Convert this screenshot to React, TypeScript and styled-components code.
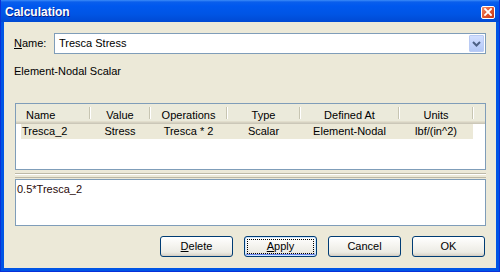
import styled, { createGlobalStyle } from "styled-components";

const GlobalStyle = createGlobalStyle`
    html, body {
        margin: 0;
        padding: 0;
        background: #ECE9D8;
    }
    * {
        box-sizing: border-box;
    }
`;

const Window = styled.div`
    width: 500px;
    height: 272px;
    display: flex;
    flex-direction: column;
    background: #0055E5;
    border-left: 1px solid #0831D9;
    border-right: 1px solid #0831D9;
    border-bottom: 1px solid #0831D9;
    font-family: "Liberation Sans", Arial, sans-serif;
    font-size: 11px;
    color: #000;
`;

const TitleBar = styled.div`
    height: 22px;
    flex-shrink: 0;
    display: flex;
    align-items: center;
    justify-content: space-between;
    padding: 2px 4px 0 4px;
    background: linear-gradient(to bottom, #3C8CF8 0px, #0A5EEC 2px, #0058EE 6px, #0055E5 14px, #0049D3 22px);
`;

const Title = styled.div`
    color: #fff;
    font-weight: bold;
    font-size: 12px;
    text-shadow: 1px 1px 0 #0A1E8A;
`;

const CloseButton = styled.div`
    width: 14px;
    height: 13px;
    border: 1px solid #fff;
    border-radius: 2px;
    background: linear-gradient(135deg, #F08C6C 0%, #E0552E 50%, #C4381A 100%);
    display: flex;
    align-items: center;
    justify-content: center;
`;

const Client = styled.div`
    flex: 1;
    margin: 0 3px 3px 3px;
    background: #ECE9D8;
    display: flex;
    flex-direction: column;
    padding: 11px 10px 0 10px;
`;

const NameRow = styled.div`
    display: flex;
    align-items: center;
    height: 21px;
`;

const Label = styled.div`
    width: 40px;
    line-height: 13px;
`;

const Underline = styled.span`
    text-decoration: underline;
`;

const Combo = styled.div`
    flex: 1;
    height: 21px;
    border: 1px solid #7F9DB9;
    background: #fff;
    display: flex;
    align-items: center;
    justify-content: space-between;
    padding: 1px 1px 1px 4px;
`;

const ComboText = styled.div`
    line-height: 13px;
`;

const DropButton = styled.div`
    width: 15px;
    height: 17px;
    border: 1px solid #BACBF4;
    border-radius: 1px;
    background: linear-gradient(to bottom, #D2DFFE 0%, #C2D3FC 50%, #B3C8F5 100%);
    display: flex;
    align-items: center;
    justify-content: center;
`;

const Caption = styled.div`
    margin-top: 11px;
    line-height: 13px;
`;

const ListBox = styled.div`
    margin-top: 25px;
    margin-left: 1px;
    height: 67px;
    border: 1px solid #7F9DB9;
    background: #fff;
    display: flex;
    flex-direction: column;
`;

const Header = styled.div`
    display: grid;
    grid-template-columns: 74px 60px 77px 73px 99px 74px 1fr;
    height: 20px;
    background: #EBEADB;
    border-bottom: 1px solid #CBC7B8;
    box-shadow: inset 0 -1px 0 #D6D2C2, inset 0 -2px 0 #E2DECD;
`;

const HeaderCell = styled.div<{ $left?: boolean; $last?: boolean }>`
    position: relative;
    padding-top: 5px;
    line-height: 13px;
    text-align: ${(p) => (p.$left ? "left" : "center")};
    padding-left: ${(p) => (p.$left ? "10px" : "0")};
    &::after {
        content: "";
        display: ${(p) => (p.$last ? "none" : "block")};
        position: absolute;
        right: 0;
        top: 3px;
        bottom: 4px;
        width: 1px;
        background: #C7C5B2;
        box-shadow: 1px 0 0 #fff;
    }
`;

const Row = styled.div`
    display: grid;
    grid-template-columns: 69px 60px 77px 73px 99px 74px;
    width: max-content;
    margin-left: 5px;
    height: 15px;
    padding-top: 1px;
    background: #ECE9D8;
`;

const Cell = styled.div<{ $left?: boolean }>`
    line-height: 13px;
    text-align: ${(p) => (p.$left ? "left" : "center")};
    padding-left: ${(p) => (p.$left ? "1px" : "0")};
    white-space: nowrap;
`;

const Splitter = styled.div`
    margin: 3px 0 1px 1px;
    height: 5px;
    border-top: 1px solid #BDB9A8;
    border-bottom: 1px solid #BDB9A8;
    box-shadow: inset 0 1px 0 #fff;
`;

const Editor = styled.div`
    margin-left: 1px;
    height: 47px;
    border: 1px solid #7F9DB9;
    background: #fff;
    padding: 3px 1px;
    line-height: 13px;
    color: #2A0A0A;
`;

const ButtonRow = styled.div`
    display: flex;
    justify-content: flex-end;
    gap: 11px;
    margin-top: 10px;
    padding-right: 1px;
`;

const Button = styled.div<{ $focused?: boolean }>`
    width: 73px;
    height: 21px;
    border: 1px solid #003C74;
    border-radius: 3px;
    background: linear-gradient(to bottom, #FFFFFF 0%, #F6F5F1 40%, #ECEBE4 80%, #D6D0C5 100%);
    display: flex;
    align-items: center;
    justify-content: center;
    line-height: 13px;
    box-shadow: ${(p) =>
        p.$focused
            ? "inset 0 0 0 1px #CEE7FF, inset 0 -1px 0 1px #6982EE"
            : "inset 0 -1px 0 #D6D0C5"};
    outline: ${(p) => (p.$focused ? "1px dotted #000" : "none")};
    outline-offset: -4px;
`;

const columns = ["Name", "Value", "Operations", "Type", "Defined At", "Units"];
const row = ["Tresca_2", "Stress", "Tresca * 2", "Scalar", "Element-Nodal", "lbf/(in^2)"];

const App = () => {
    return (
        <>
            <GlobalStyle />
            <Window>
                <TitleBar>
                    <Title>Calculation</Title>
                    <CloseButton>
                        <svg width="8" height="8" viewBox="0 0 8 8">
                            <path d="M1 1 L7 7 M7 1 L1 7" stroke="#fff" strokeWidth="1.8" strokeLinecap="square" />
                        </svg>
                    </CloseButton>
                </TitleBar>
                <Client>
                    <NameRow>
                        <Label>
                            <Underline>N</Underline>ame:
                        </Label>
                        <Combo>
                            <ComboText>Tresca Stress</ComboText>
                            <DropButton>
                                <svg width="9" height="6" viewBox="0 0 9 6">
                                    <path d="M1 1 L4.5 4.5 L8 1" stroke="#4D6185" strokeWidth="2" fill="none" />
                                </svg>
                            </DropButton>
                        </Combo>
                    </NameRow>
                    <Caption>Element-Nodal Scalar</Caption>
                    <ListBox>
                        <Header>
                            {columns.map((c, i) => (
                                <HeaderCell key={c} $left={i === 0}>
                                    {c}
                                </HeaderCell>
                            ))}
                            <HeaderCell $last />
                        </Header>
                        <Row>
                            {row.map((c, i) => (
                                <Cell key={i} $left={i === 0}>
                                    {c}
                                </Cell>
                            ))}
                        </Row>
                    </ListBox>
                    <Splitter />
                    <Editor>0.5*Tresca_2</Editor>
                    <ButtonRow>
                        <Button>
                            <span>
                                <Underline>D</Underline>elete
                            </span>
                        </Button>
                        <Button $focused>
                            <span>
                                <Underline>A</Underline>pply
                            </span>
                        </Button>
                        <Button>Cancel</Button>
                        <Button>OK</Button>
                    </ButtonRow>
                </Client>
            </Window>
        </>
    );
};

export default App;
